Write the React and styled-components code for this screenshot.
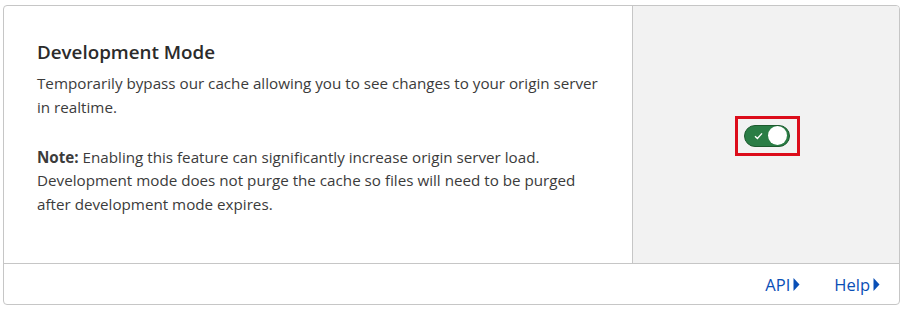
import styled, { createGlobalStyle } from "styled-components";

const GlobalStyle = createGlobalStyle`
  body {
    margin: 0;
    background: #ffffff;
    font-family: "Open Sans", "Noto Sans", sans-serif;
  }
`;

const Page = styled.div`
  padding: 5px 7px 0 3px;
`;

const Card = styled.section`
  border: 1px solid #c6c6c6;
  border-radius: 4px;
  background: #fff;
  overflow: hidden;
`;

const Main = styled.div`
  display: grid;
  grid-template-columns: 1fr 267px;
  height: 257px;
  border-bottom: 1px solid #c6c6c6;
`;

const Content = styled.div`
  padding: 34px 20px 0 33px;
  color: #333;
`;

const Title = styled.h2`
  margin: 0 0 8px;
  font-size: 18.8px;
  font-weight: 600;
  line-height: 24px;
  color: #2b2b2b;
`;

const Text = styled.p`
  margin: 0 0 26px;
  font-size: 15.2px;
  line-height: 23.8px;
  color: #3b3b3b;
  white-space: nowrap;
`;

const Control = styled.div`
  background: #f2f2f2;
  border-left: 1px solid #c6c6c6;
  display: flex;
  align-items: center;
  justify-content: center;
`;

const Highlight = styled.div`
  border: 3px solid #dc0d1a;
  padding: 6px 7px 6px 6px;
  display: flex;
  margin-left: 3px;
  margin-top: 2px;
`;

const Switch = styled.button`
  width: 46px;
  height: 22px;
  border-radius: 11px;
  border: 1px solid #1d5a2e;
  background: #2a7d45;
  padding: 0 2px 0 9px;
  display: flex;
  align-items: center;
  justify-content: space-between;
  cursor: pointer;
`;

const Knob = styled.span`
  width: 19px;
  height: 19px;
  border-radius: 50%;
  background: #fff;
`;

const Footer = styled.footer`
  height: 40px;
  display: flex;
  align-items: center;
  justify-content: flex-end;
  gap: 34px;
  padding-right: 19px;
`;

const Link = styled.a`
  display: flex;
  align-items: center;
  gap: 3px;
  font-size: 16.5px;
  color: #0a4fb6;
  text-decoration: none;
  margin-top: 1px;
`;

const Arrow = () => (
  <svg width="7" height="13" viewBox="0 0 7 13">
    <path d="M0.5 0 L6.5 6.5 L0.5 13 Z" fill="#0a4fb6" />
  </svg>
);

export default function App() {
  return (
    <Page>
      <GlobalStyle />
      <Card>
        <Main>
          <Content>
            <Title>Development Mode</Title>
            <Text>
              Temporarily bypass our cache allowing you to see changes to your origin server
              <br />
              in realtime.
            </Text>
            <Text>
              <strong>Note:</strong> Enabling this feature can significantly increase origin server load.
              <br />
              Development mode does not purge the cache so files will need to be purged
              <br />
              after development mode expires.
            </Text>
          </Content>
          <Control>
            <Highlight>
              <Switch aria-pressed="true">
                <svg width="9" height="8" viewBox="0 0 9 8">
                  <path d="M1 4.2 L3.4 6.4 L8 1.4" fill="none" stroke="#fff" strokeWidth="1.4" />
                </svg>
                <Knob />
              </Switch>
            </Highlight>
          </Control>
        </Main>
        <Footer>
          <Link href="#">API<Arrow /></Link>
          <Link href="#">Help<Arrow /></Link>
        </Footer>
      </Card>
    </Page>
  );
}
